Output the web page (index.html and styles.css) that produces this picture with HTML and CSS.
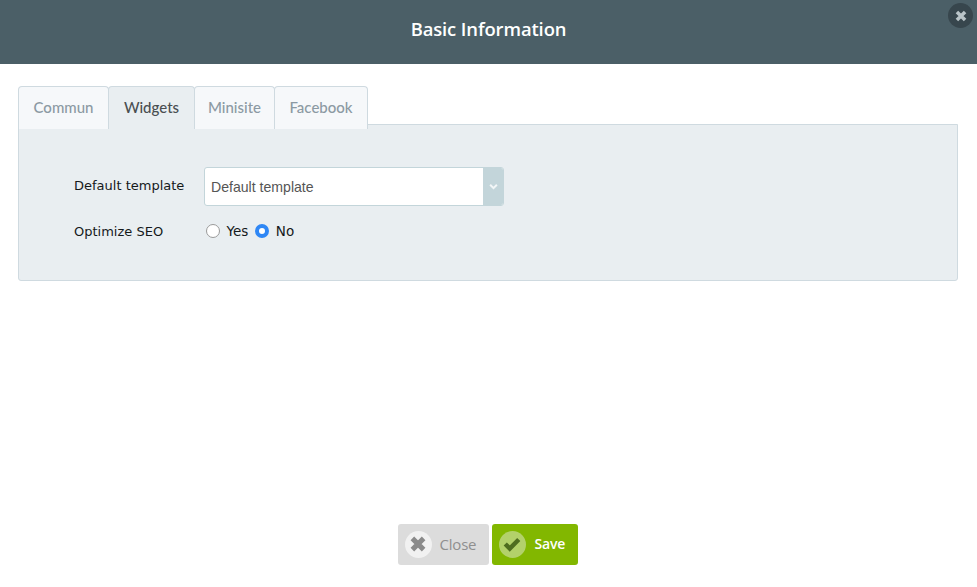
FILE: index.html
```html
<!DOCTYPE html>
<html lang="en">
<head>
<meta charset="utf-8">
<title>Basic Information</title>
<link rel="stylesheet" href="styles.css">
</head>
<body>
<div class="modal">
  <header class="head">
    <h1 class="title">Basic Information</h1>
    <button class="dismiss" aria-label="Close">
      <svg class="dismiss-x" viewBox="0 0 12 12"><path d="M2.5 2.500 9.500 9.500M9.500 2.500 2.500 9.500"/></svg>
    </button>
  </header>
  <main class="body">
    <nav class="tabs">
      <a class="tab">Commun</a>
      <a class="tab tab-active">Widgets</a>
      <a class="tab">Minisite</a>
      <a class="tab">Facebook</a>
    </nav>
    <section class="panel">
      <div class="row row-select">
        <label class="label">Default template</label>
        <div class="select">
          <span class="select-value">Default template</span>
          <span class="select-arrow">
            <svg class="chev" viewBox="0 0 8 6"><path d="M1 1.500 4 4.500 7 1.500"/></svg>
          </span>
        </div>
      </div>
      <div class="row row-radio">
        <label class="label">Optimize SEO</label>
        <div class="radios">
          <span class="radio"></span><span class="radio-text">Yes</span>
          <span class="radio radio-on"></span><span class="radio-text">No</span>
        </div>
      </div>
    </section>
  </main>
  <footer class="foot">
    <button class="btn btn-close">
      <span class="btn-icon icon-close"><svg class="glyph" viewBox="0 0 16 16"><path d="M3 3 13 13M13 3 3 13"/></svg></span>
      <span>Close</span>
    </button>
    <button class="btn btn-save">
      <span class="btn-icon icon-save"><svg class="glyph" viewBox="0 0 16 16"><path d="M2 8 6 12 14 4"/></svg></span>
      <span>Save</span>
    </button>
  </footer>
</div>
</body>
</html>
```
FILE: styles.css
```css
* { box-sizing: border-box; }
html, body { margin: 0; padding: 0; height: 587px; overflow: hidden; background: #fff; }
.modal { position: relative; display: flex; flex-direction: column; height: 587px; }
.head { height: 64px; background: #4b5f67; display: flex; align-items: center; justify-content: center; flex: none; padding-bottom: 6px; }
.title { margin: 0; color: #fff; font: 600 18.400px/1 "Open Sans", "Liberation Sans", sans-serif; letter-spacing: -0.1px; }
.dismiss { position: absolute; top: 3px; right: 4px; width: 25px; height: 25px; padding: 0; border: 0; border-radius: 50%; background: #37464d; display: flex; align-items: center; justify-content: center; }
.dismiss-x { width: 14px; height: 14px; fill: none; stroke: #b9c4c8; stroke-width: 3; }
.body { flex: 1; padding: 22px 19px 0 18px; }
.tabs { display: flex; height: 43px; position: relative; z-index: 1; }
.tab { height: 43px; padding: 0 0 2px; display: flex; align-items: center; justify-content: center; background: #f6f8fa; border: 1px solid #cfdae0; border-bottom: 0; border-radius: 4px 4px 0 0; color: #8c9aa3; font: 500 15px/1 Lato, "Open Sans", sans-serif; margin-left: -1px; }
.tab:first-child { margin-left: 0; width: 91px; }
.tab:nth-child(2) { width: 87px; }
.tab:nth-child(3) { width: 81px; }
.tab:nth-child(4) { width: 94px; }
.tab-active { background: #e9eef1; color: #4a4f52; }
.panel { height: 157px; margin-top: -5px; background: #e9eef1; border: 1px solid #cfdae0; border-radius: 0 0 3px 3px; padding: 0 55px; }
.row { display: flex; align-items: center; }
.row-select { margin-top: 42px; height: 39px; }
.row-radio { margin-top: 14px; height: 22px; }
.label { width: 130px; font: 13px/1 "DejaVu Sans", Verdana, sans-serif; color: #15191b; flex: none; }
.row-select .label { padding-bottom: 2px; }
.select { width: 300px; height: 39px; display: flex; background: #fff; border: 1px solid #c3d5da; border-radius: 3px; overflow: hidden; }
.select-value { flex: 1; padding-left: 6px; font: 14.100px/39px "Liberation Sans", Arial, sans-serif; color: #555; }
.select-arrow { width: 20px; background: #c3d5da; display: flex; align-items: center; justify-content: center; }
.chev { width: 9px; height: 7px; fill: none; stroke: #f2f6f7; stroke-width: 1.800; }
.radios { display: flex; align-items: center; margin-left: 2px; }
.radio { width: 14px; height: 14px; border-radius: 50%; border: 1px solid #9a9a9a; background: #fff; flex: none; }
.radio-on { background: #fff; border: 4.500px solid #2f87f5; }
.radio-text { font: 13.500px/1 "DejaVu Sans", Verdana, sans-serif; color: #15191b; margin: 0 7px 0 6.500px; padding-top: 2px; }
.foot { flex: none; height: 63px; display: flex; justify-content: center; gap: 3px; padding-right: 2px; }
.btn { height: 41px; border: 0; border-radius: 3px; display: flex; align-items: center; padding: 0 0 1px 7px; font: 600 14px/1 "Open Sans", sans-serif; letter-spacing: -0.2px; gap: 8px; }
.btn-close { width: 91px; background: #dcdcdc; color: #8f8f8f; font-weight: 500; font-size: 15px; }
.btn-save { width: 86px; background: #82b700; color: #fff; gap: 9px; }
.btn-icon { width: 27px; height: 27px; border-radius: 50%; display: flex; align-items: center; justify-content: center; flex: none; }
.icon-close { background: #f1f1f1; }
.icon-save { background: #b3d16a; }
.glyph { width: 18px; height: 18px; fill: none; stroke-width: 4.500; }
.icon-close .glyph { stroke: #8a8a8a; }
.icon-save .glyph { stroke: #4f6d1f; stroke-width: 4; }
```
